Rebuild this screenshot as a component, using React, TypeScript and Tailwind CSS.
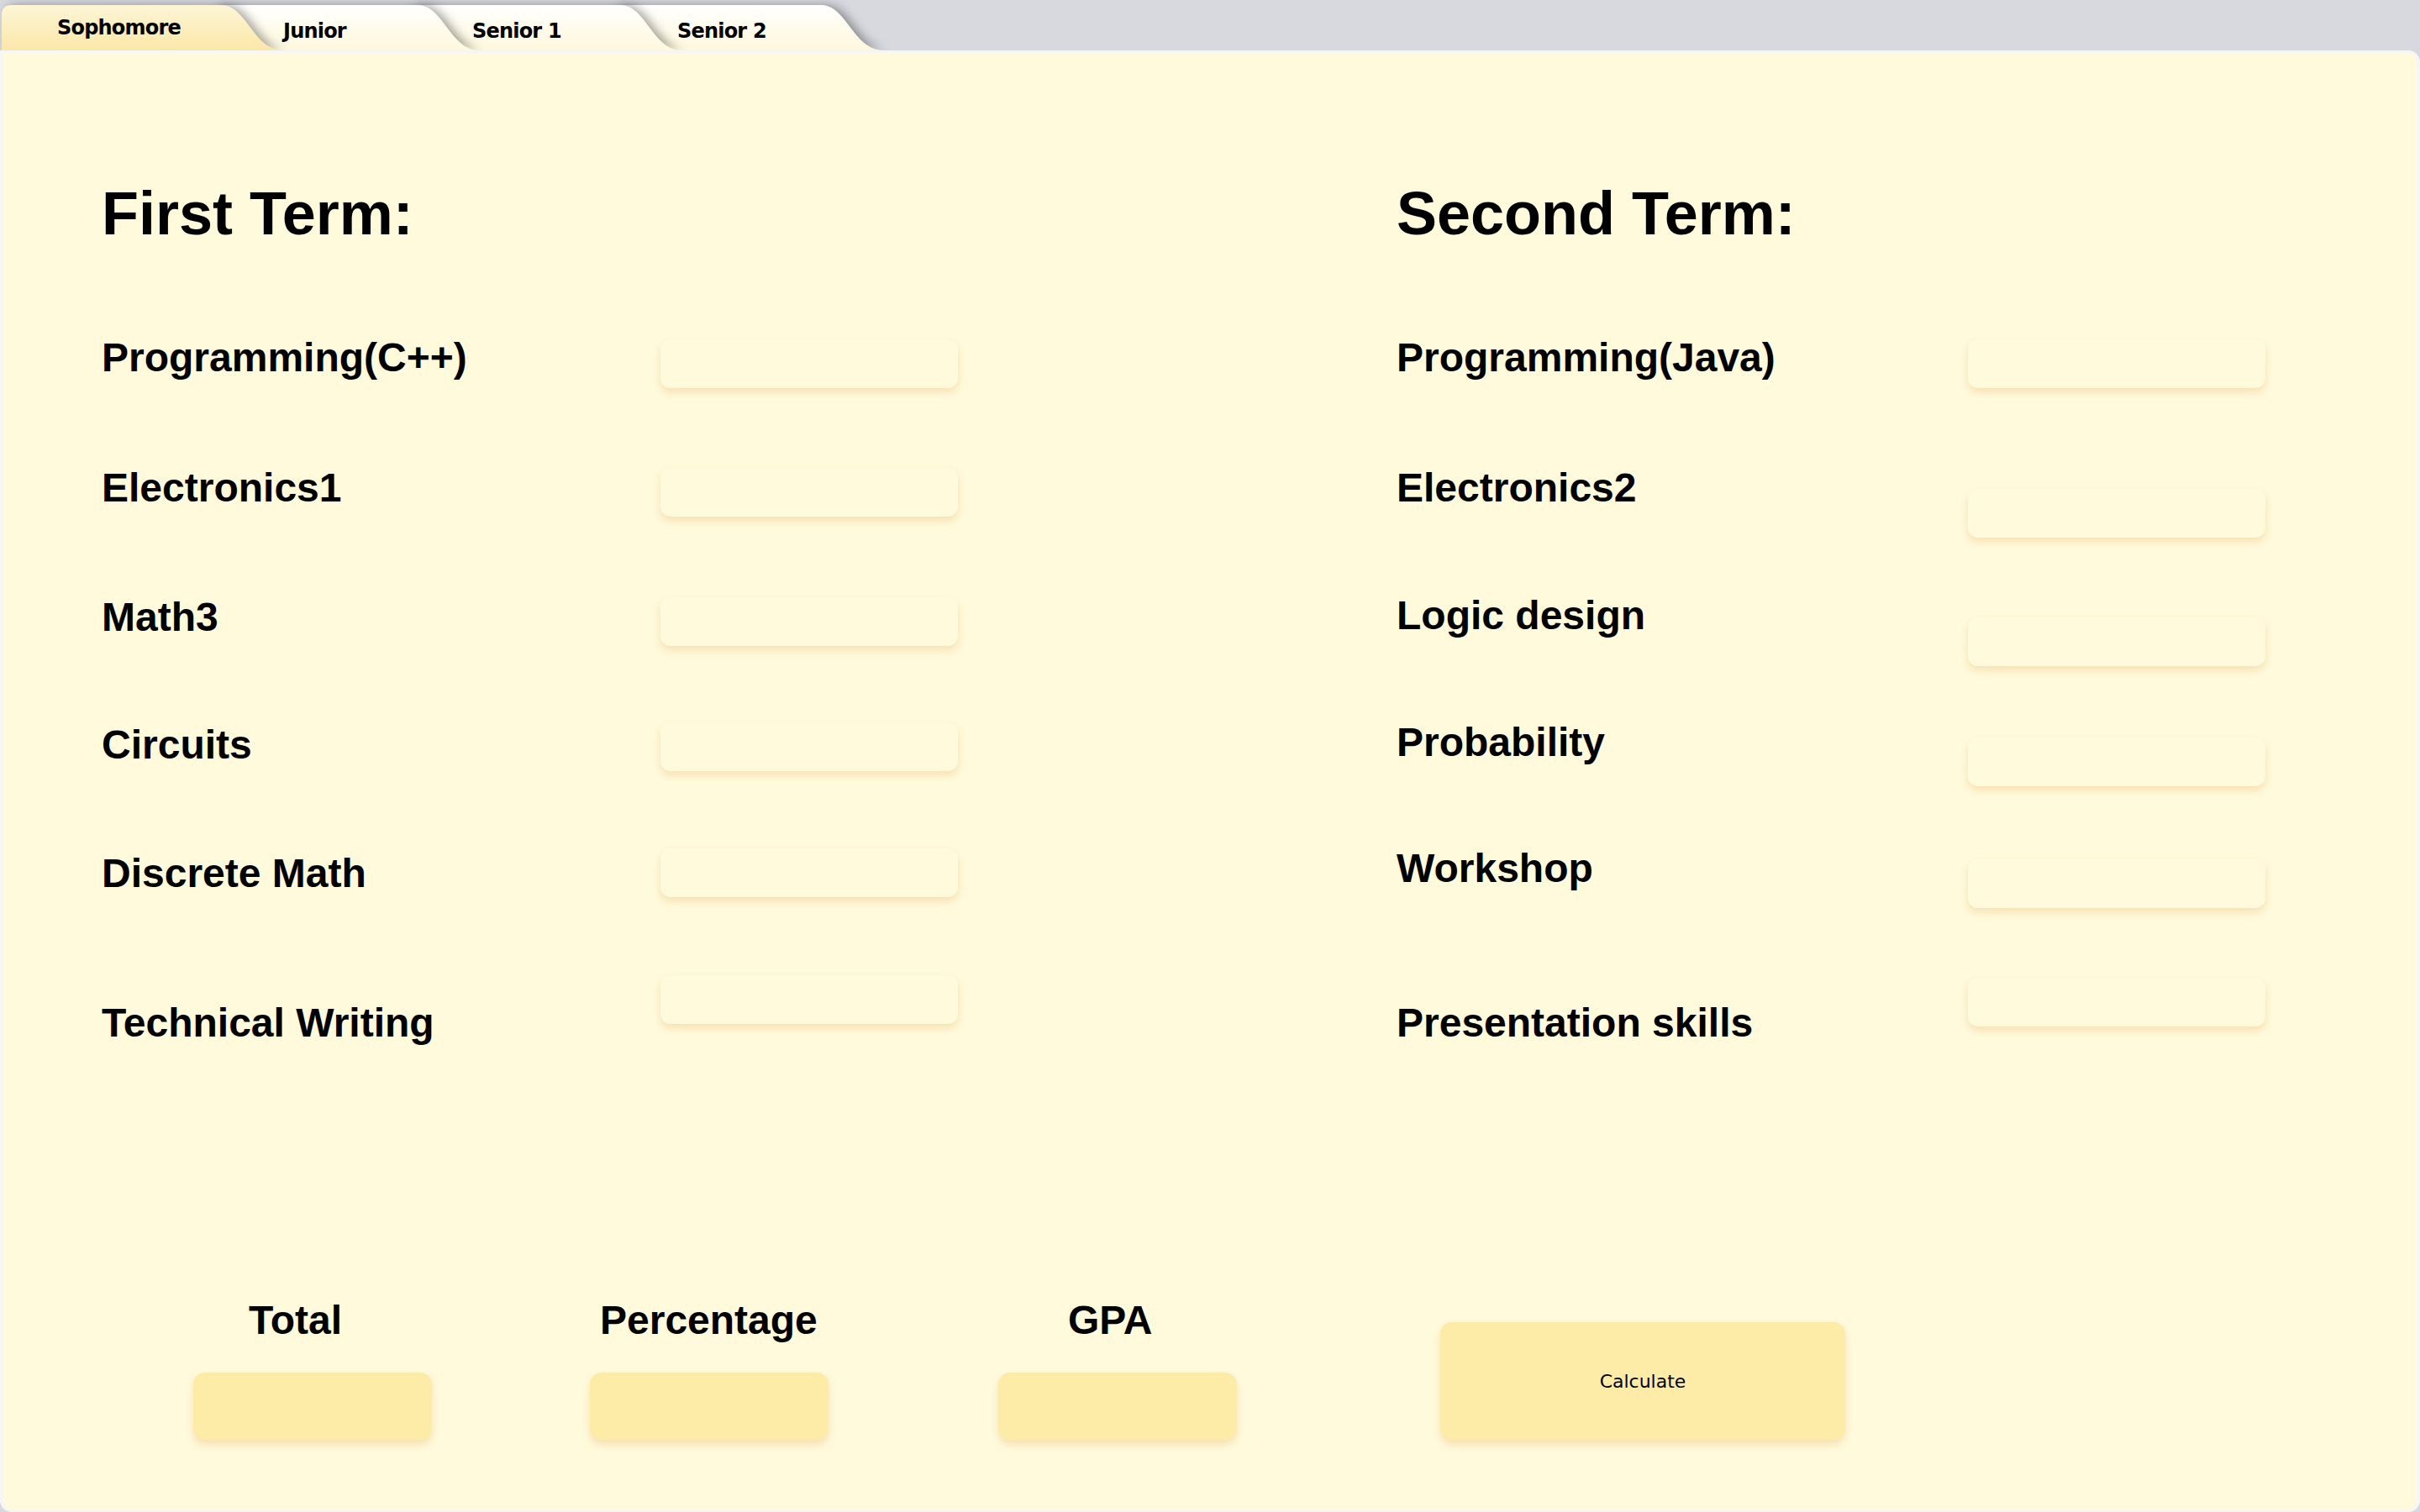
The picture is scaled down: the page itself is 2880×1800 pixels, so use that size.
import React from "react";

const tabs = [
  { label: "Sophomore", w: 261, width: "w-[335px]", ml: "", z: "z-40", text: "pl-[66px] mt-[14px]", selected: true },
  { label: "Junior", w: 244, width: "w-[318px]", ml: "-ml-[84px]", z: "z-30", text: "pl-[84px] mt-[18px]", selected: false },
  { label: "Senior 1", w: 251, width: "w-[325px]", ml: "-ml-[84px]", z: "z-20", text: "pl-[75px] mt-[18px]", selected: false },
  { label: "Senior 2", w: 249, width: "w-[323px]", ml: "-ml-[84px]", z: "z-10", text: "pl-[78px] mt-[18px]", selected: false },
];

const firstTerm = {
  title: "First Term:",
  labelWidth: "w-[665px]",
  labels: [
    { text: "Programming(C++)", mt: "mt-[104px]" },
    { text: "Electronics1", mt: "mt-[99px]" },
    { text: "Math3", mt: "mt-[98px]" },
    { text: "Circuits", mt: "mt-[96px]" },
    { text: "Discrete Math", mt: "mt-[97px]" },
    { text: "Technical Writing", mt: "mt-[122px]" },
  ],
  fields: ["mt-[110px]", "mt-[95px]", "mt-[96px]", "mt-[91px]", "mt-[92px]", "mt-[93px]"],
};

const secondTerm = {
  title: "Second Term:",
  labelWidth: "w-[680px]",
  labels: [
    { text: "Programming(Java)", mt: "mt-[104px]" },
    { text: "Electronics2", mt: "mt-[99px]" },
    { text: "Logic design", mt: "mt-[96px]" },
    { text: "Probability", mt: "mt-[95px]" },
    { text: "Workshop", mt: "mt-[94px]" },
    { text: "Presentation skills", mt: "mt-[128px]" },
  ],
  fields: ["mt-[110px]", "mt-[120px]", "mt-[95px]", "mt-[85px]", "mt-[87px]", "mt-[83px]"],
};

const results = [
  { label: "Total", labelMl: "ml-[66px]", ml: "" },
  { label: "Percentage", labelMl: "ml-[12px]", ml: "ml-[188px]" },
  { label: "GPA", labelMl: "ml-[83px]", ml: "ml-[202px]" },
];

function Tab({ tab, i }: { tab: (typeof tabs)[number]; i: number }) {
  const S = 74;
  const H = 54;
  const d = `M0,${H} L0,12 Q0,0 12,0 L${tab.w},0 C${tab.w + S * 0.42},0 ${tab.w + S * 0.52},${H} ${tab.w + S},${H} Z`;
  return (
    <div className={`relative flex h-[54px] shrink-0 items-start ${tab.width} ${tab.ml} ${tab.z}`}>
      <svg
        className="absolute inset-0 h-full w-full overflow-visible drop-shadow-[6px_0_6px_rgba(0,0,0,0.34)]"
        viewBox={`0 0 ${tab.w + S} ${H}`}
        preserveAspectRatio="none"
      >
        <defs>
          <linearGradient id={`tabfill${i}`} x1="0" y1="0" x2="0" y2="1">
            {tab.selected ? (
              <>
                <stop offset="0" stopColor="#fdf6d6" />
                <stop offset="1" stopColor="#fbe7a8" />
              </>
            ) : (
              <>
                <stop offset="0" stopColor="#ffffff" />
                <stop offset="1" stopColor="#fef8dc" />
              </>
            )}
          </linearGradient>
        </defs>
        <path d={d} fill={`url(#tabfill${i})`} />
      </svg>
      <span
        className={`relative text-[24px] leading-[26px] tracking-[-0.8px] font-bold text-black font-['DejaVu_Sans',sans-serif] ${tab.text}`}
      >
        {tab.label}
      </span>
    </div>
  );
}

function TermColumn({ term, className }: { term: typeof firstTerm; className?: string }) {
  return (
    <div className={`flex flex-col ${className ?? ""}`}>
      <h1 className="mt-[151px] h-[80px] text-[72px] leading-[80px] font-bold text-black">{term.title}</h1>
      <div className="flex">
        <div className={`flex flex-col ${term.labelWidth}`}>
          {term.labels.map((l) => (
            <div key={l.text} className={`h-[56px] text-[48px] leading-[56px] font-bold whitespace-nowrap text-black ${l.mt}`}>
              {l.text}
            </div>
          ))}
        </div>
        <div className="flex flex-col">
          {term.fields.map((mt, i) => (
            <div
              key={i}
              className={`h-[58px] w-[354px] rounded-[12px] bg-[#fffadc] shadow-[0_5px_10px_rgba(236,196,128,0.45)] ${mt}`}
            />
          ))}
        </div>
      </div>
    </div>
  );
}

export default function App() {
  return (
    <div className="flex h-[1800px] w-[2880px] flex-col overflow-hidden bg-[#d8d9df] font-['Liberation_Sans',Arial,sans-serif]">
      <div className="relative z-0 flex h-[60px] shrink-0 overflow-hidden pt-[6px] pl-[2px]">
        {tabs.map((t, i) => (
          <Tab key={t.label} tab={t} i={i} />
        ))}
      </div>

      <div className="flex flex-1 flex-col rounded-[14px] rounded-tl-none border-[3px] border-x-[4px] border-[#f6f6f6] bg-[#fffadc]">
        <div className="flex pl-[117px]">
          <TermColumn term={firstTerm} className="w-[1541px]" />
          <TermColumn term={secondTerm} />
        </div>

        <div className="mt-auto mb-[83px] flex items-end pl-[226px]">
          {results.map((r) => (
            <div key={r.label} className={`flex flex-col ${r.ml}`}>
              <div className={`h-[56px] text-[48px] leading-[56px] font-bold text-black ${r.labelMl}`}>{r.label}</div>
              <div className="mt-[34px] h-[80px] w-[284px] rounded-[14px] bg-[#fdeba8] shadow-[0_6px_10px_rgba(232,190,120,0.4)]" />
            </div>
          ))}
          <button className="ml-[242px] flex h-[140px] w-[482px] items-center justify-center rounded-[14px] bg-[#fdeba8] text-[22px] text-black shadow-[0_6px_10px_rgba(232,190,120,0.4)] font-['DejaVu_Sans',sans-serif]">
            Calculate
          </button>
        </div>
      </div>
    </div>
  );
}
